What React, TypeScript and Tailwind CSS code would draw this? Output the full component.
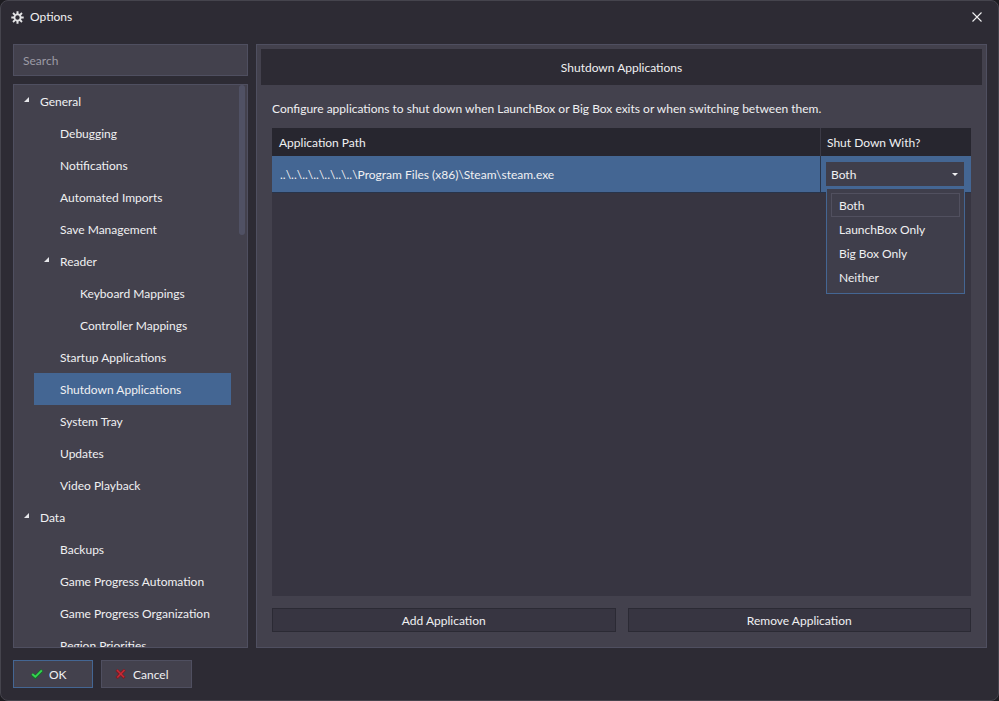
import React, { useState } from 'react';
import clsx from 'clsx';

type TreeItem = {
  label: string;
  level: number;
  group?: boolean;
};

const treeItems: TreeItem[] = [
  { label: 'General', level: 0, group: true },
  { label: 'Debugging', level: 1 },
  { label: 'Notifications', level: 1 },
  { label: 'Automated Imports', level: 1 },
  { label: 'Save Management', level: 1 },
  { label: 'Reader', level: 1, group: true },
  { label: 'Keyboard Mappings', level: 2 },
  { label: 'Controller Mappings', level: 2 },
  { label: 'Startup Applications', level: 1 },
  { label: 'Shutdown Applications', level: 1 },
  { label: 'System Tray', level: 1 },
  { label: 'Updates', level: 1 },
  { label: 'Video Playback', level: 1 },
  { label: 'Data', level: 0, group: true },
  { label: 'Backups', level: 1 },
  { label: 'Game Progress Automation', level: 1 },
  { label: 'Game Progress Organization', level: 1 },
  { label: 'Region Priorities', level: 1 },
];

const shutdownModes = ['Both', 'LaunchBox Only', 'Big Box Only', 'Neither'];

const levelMargin = ['ml-0', 'ml-5', 'ml-10'];

const GearIcon = () => (
  <svg viewBox="0 0 13 13" className="size-[13px]" aria-hidden="true">
    <g stroke="#e4e4e6" strokeWidth="2" fill="none">
      <path d="M6.5 0.3v3M6.5 9.7v3M0.3 6.5h3M9.7 6.5h3" />
      <path d="M2 2l2 2M9 9l2 2M11 2l-2 2M4 9l-2 2" strokeWidth="1.8" />
      <circle cx="6.5" cy="6.5" r="3.1" strokeWidth="1.8" />
    </g>
  </svg>
);

const Expander = () => (
  <svg viewBox="0 0 5 5" className="size-[5px]" aria-hidden="true">
    <path d="M5 0v5H0z" fill="#e6e6ea" />
  </svg>
);

const CheckIcon = () => (
  <svg viewBox="0 0 12 10" className="h-[10px] w-3" aria-hidden="true">
    <path d="M1 5.2l3.3 3L11 1.3" fill="none" stroke="#176b2b" strokeWidth="3.4" />
    <path d="M1.2 5l3.1 2.8L10.8 1.3" fill="none" stroke="#35d450" strokeWidth="1.9" />
  </svg>
);

const CrossIcon = () => (
  <svg viewBox="0 0 12 10" className="h-[10px] w-3" aria-hidden="true">
    <path d="M1.5 1l8 8M9.8 0.8L1.5 9" fill="none" stroke="#7a1c26" strokeWidth="3" />
    <path d="M2 1l7 7.3M9.5 1L2.3 8.5" fill="none" stroke="#c62a34" strokeWidth="1.5" />
  </svg>
);

const App: React.FC = () => {
  const [page, setPage] = useState('Shutdown Applications');
  const [mode, setMode] = useState('Both');
  const [listOpen, setListOpen] = useState(true);

  return (
    <div className="h-screen bg-[#1d1c21] font-[Lato,'Open_Sans',sans-serif] text-xs text-[#f0f0f2]">
      <div className="flex h-full flex-col rounded-lg border border-[#45444d] bg-[#2d2b34] pr-[11px] pb-3 pl-3">
        {/* Title bar */}
        <header className="flex h-8 shrink-0 items-center justify-between pr-[5px]">
          <h1 className="-ml-[2px] flex items-center gap-[6px]">
            <GearIcon />
            Options
          </h1>
          <button type="button" aria-label="Close">
            <svg viewBox="0 0 10 10" className="size-[10px]" aria-hidden="true">
              <path d="M0.5 0.5l9 9M9.5 0.5l-9 9" stroke="#f0f0f2" strokeWidth="1.1" />
            </svg>
          </button>
        </header>

        <div className="mt-[11px] flex min-h-0 flex-1 gap-2">
          {/* Sidebar */}
          <aside className="flex w-[235px] shrink-0 flex-col gap-2">
            <input
              type="search"
              aria-label="Search"
              placeholder="Search"
              className="h-8 w-full shrink-0 border border-[#4f4f60] bg-[#43414d] px-[9px] outline-none placeholder:text-[#9c9ba5]"
            />
            <nav className="relative min-h-0 flex-1 overflow-hidden border border-[#4f4f60] bg-[#43414d] pr-4 pl-[6px]">
              <ul>
                {treeItems.map((item) => (
                  <li key={item.label} className={levelMargin[item.level]}>
                    <div className="flex h-8">
                      <span className="flex w-[14px] shrink-0 items-center pb-1 pl-1">
                        {item.group && <Expander />}
                      </span>
                      <button
                        type="button"
                        onClick={() => setPage(item.label)}
                        className={clsx(
                          'flex-1 pt-[2px] pl-[6px] text-left whitespace-nowrap',
                          item.label === page && '-ml-5 bg-[#446693] pl-[26px]'
                        )}
                      >
                        {item.label}
                      </button>
                    </div>
                  </li>
                ))}
              </ul>
              <div className="absolute top-0 right-[2px] h-[150px] w-[6px] rounded-full bg-[#505164]" />
            </nav>
          </aside>

          {/* Page */}
          <main className="flex min-w-0 flex-1 flex-col border border-[#4f4f60] bg-[#43414d] p-1">
            <h2 className="flex h-9 shrink-0 items-center justify-center bg-[#2d2b34] pt-[2px]">
              Shutdown Applications
            </h2>
            <div className="flex min-h-0 flex-1 flex-col px-[11px] pt-4 pb-[11px]">
              <p className="leading-4">
                Configure applications to shut down when LaunchBox or Big Box exits or when switching between them.
              </p>
              <div className="mt-[11px] min-h-0 flex-1 bg-[#373541]">
                <table className="w-full table-fixed border-separate border-spacing-0">
                  <thead>
                    <tr className="h-7 bg-[#27262f] text-left">
                      <th className="border-r border-[#3b3a46] px-[7px] pt-[2px] font-normal">Application Path</th>
                      <th className="w-[150px] px-[6px] pt-[2px] font-normal">Shut Down With?</th>
                    </tr>
                  </thead>
                  <tbody>
                    <tr className="h-[37px] bg-[#446693]">
                      <td className="border-r border-b border-[#28344a] px-2 pt-[2px]">
                        ..\..\..\..\..\..\..\Program Files (x86)\Steam\steam.exe
                      </td>
                      <td className="border-b border-[#28344a] pr-[7px] pl-[5px]">
                        <div className="relative">
                          <select
                            aria-label="Shut Down With?"
                            value={mode}
                            onChange={(e) => setMode(e.target.value)}
                            className="block h-6 w-full appearance-none bg-[#3f3e4b] px-[5px] pt-[2px] outline-none"
                          >
                            {shutdownModes.map((name) => (
                              <option key={name}>{name}</option>
                            ))}
                          </select>
                          <svg
                            viewBox="0 0 6 3"
                            className="pointer-events-none absolute top-[11px] right-[6px] h-[3px] w-[6px]"
                            aria-hidden="true"
                          >
                            <path d="M0 0h6L3 3z" fill="#f0f0f2" />
                          </svg>
                          {listOpen && (
                            <ul
                              role="listbox"
                              aria-label="Shut Down With?"
                              className="absolute top-[26px] -right-px left-0 border border-[#446693] bg-[#3f3e4b] p-1"
                            >
                              {shutdownModes.map((name) => (
                                <li
                                  key={name}
                                  role="option"
                                  aria-selected={name === mode}
                                  onClick={() => {
                                    setMode(name);
                                    setListOpen(false);
                                  }}
                                  className={clsx(
                                    'flex h-6 items-center border px-[7px] pt-[2px]',
                                    name === mode ? 'border-[#51505f]' : 'border-transparent'
                                  )}
                                >
                                  {name}
                                </li>
                              ))}
                            </ul>
                          )}
                        </div>
                      </td>
                    </tr>
                  </tbody>
                </table>
              </div>
              <div className="mt-3 grid shrink-0 grid-cols-2 gap-3">
                <button type="button" className="h-6 border border-[#2b2a34] bg-[#373541] pt-[2px]">
                  Add Application
                </button>
                <button type="button" className="h-6 border border-[#2b2a34] bg-[#373541] pt-[2px]">
                  Remove Application
                </button>
              </div>
            </div>
          </main>
        </div>

        {/* Dialog buttons */}
        <footer className="mt-3 flex shrink-0 gap-2">
          <button
            type="button"
            className="flex h-7 w-20 items-center gap-[6px] border border-[#446693] bg-[#43414d] pl-[17px]"
          >
            <CheckIcon />
            <span className="pt-[2px]">OK</span>
          </button>
          <button
            type="button"
            className="flex h-7 w-[91px] items-center gap-[6px] border border-[#4f4f60] bg-[#43414d] pl-[13px]"
          >
            <CrossIcon />
            <span className="pt-[2px]">Cancel</span>
          </button>
        </footer>
      </div>
    </div>
  );
};

export default App;
